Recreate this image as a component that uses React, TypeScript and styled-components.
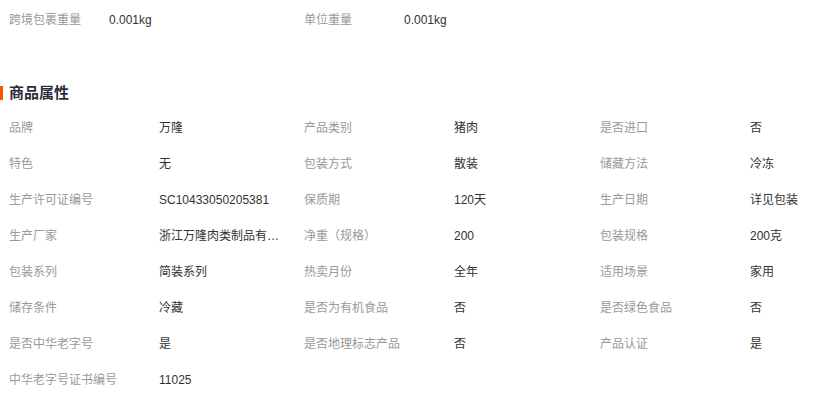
import React from "react";
import styled, { createGlobalStyle } from "styled-components";

const GlobalStyle = createGlobalStyle`
  html, body { margin: 0; padding: 0; background: #fff; }
  body {
    font-family: "Liberation Sans", Arial, "Noto Sans CJK SC", sans-serif;
    font-size: 12px;
    color: #333;
  }
`;

const Page = styled.div`
  width: 837px;
  padding-top: 2px;
`;

const WeightRow = styled.div`
  display: grid;
  grid-template-columns: 100px 195px 100px 195px;
  padding-left: 9px;
  height: 36px;
  line-height: 36px;
`;

const Title = styled.h3`
  position: relative;
  margin: 45px 0 7px;
  padding-left: 9px;
  height: 20px;
  line-height: 20px;
  font-size: 15px;
  font-weight: bold;
  color: #2c2c3a;
  &::before {
    content: "";
    position: absolute;
    left: 0;
    top: 3px;
    width: 3px;
    height: 14px;
    background: #ff5000;
  }
`;

const AttrGrid = styled.div`
  display: grid;
  grid-template-columns: 150px 145px 150px 146px 150px 146px;
  grid-auto-rows: 36px;
  padding-left: 9px;
  line-height: 36px;
`;

const Label = styled.span`
  color: #999;
  white-space: nowrap;
`;

const Value = styled.span`
  color: #333;
  white-space: nowrap;
  overflow: hidden;
  text-overflow: ellipsis;
  max-width: 124px;
`;

const attrs: [string, string][] = [
  ["品牌", "万隆"],
  ["产品类别", "猪肉"],
  ["是否进口", "否"],
  ["特色", "无"],
  ["包装方式", "散装"],
  ["储藏方法", "冷冻"],
  ["生产许可证编号", "SC10433050205381"],
  ["保质期", "120天"],
  ["生产日期", "详见包装"],
  ["生产厂家", "浙江万隆肉类制品有限公司"],
  ["净重（规格）", "200"],
  ["包装规格", "200克"],
  ["包装系列", "简装系列"],
  ["热卖月份", "全年"],
  ["适用场景", "家用"],
  ["储存条件", "冷藏"],
  ["是否为有机食品", "否"],
  ["是否绿色食品", "否"],
  ["是否中华老字号", "是"],
  ["是否地理标志产品", "否"],
  ["产品认证", "是"],
  ["中华老字号证书编号", "11025"],
];

export default function App() {
  return (
    <Page>
      <GlobalStyle />
      <WeightRow>
        <Label>跨境包裹重量</Label>
        <Value>0.001kg</Value>
        <Label>单位重量</Label>
        <Value>0.001kg</Value>
      </WeightRow>
      <Title>商品属性</Title>
      <AttrGrid>
        {attrs.map(([k, v]) => (
          <React.Fragment key={k}>
            <Label>{k}</Label>
            <Value title={v}>{v}</Value>
          </React.Fragment>
        ))}
      </AttrGrid>
    </Page>
  );
}
